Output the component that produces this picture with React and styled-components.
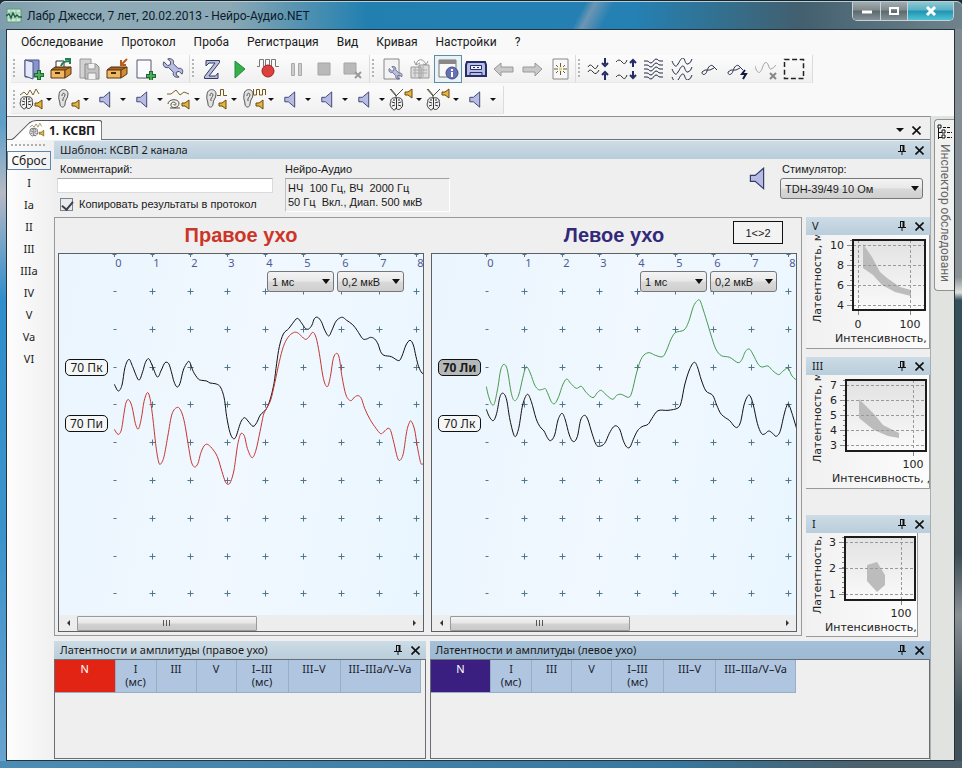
import React from "react";
import styled, { createGlobalStyle, css } from "styled-components";

const UI = '"Noto Sans", "Open Sans", sans-serif';
const CHROME = 'Roboto, "Noto Sans", sans-serif';
const FORM = '"Liberation Sans", Arial, sans-serif';
const PLOT = '"DejaVu Sans", Verdana, sans-serif';

const GlobalStyle = createGlobalStyle`
  * { box-sizing: border-box; }
  html, body, #root { height: 100%; }
  body { margin: 0; background: #1d2a30; overflow: hidden; font: 12px ${UI}; color: #1a1a1a; }
  button, input, select { font: inherit; color: inherit; margin: 0; }
`;

/* ---------- window frame ---------- */

const Window = styled.div`
  display: flex;
  flex-direction: column;
  height: 100vh;
  padding: 0 7px 7px 6px;
  border-top: 1px solid #16242c;
  border-radius: 6px 6px 0 0;
  background:
    linear-gradient(90deg, transparent 70%, #4c616b 90%) bottom / 100% 7px no-repeat,
    linear-gradient(90deg, #4b8db5, #2d6f96) bottom / 100% 7px no-repeat,
    linear-gradient(#7f8b91 0, #8a9194 36%, #dfe0df 38%, #35505a 39%, #3c4c54 72%, #8a8f92 80%, #43525a 92%) right / 7px 100% no-repeat,
    linear-gradient(#7f9ba9 0, #5e9fc8 16%, #b7b9c4 25%, #2f8ecb 39%, #3c93cb 70%, #6aa3cf 100%);
`;

const TitleBar = styled.header`
  display: flex;
  flex: none;
  height: 28px;
  margin: 0 -7px 0 -6px;
  padding: 0 8px 0 6px;
  border-top: 1px solid #b9cdd6;
  border-radius: 6px 6px 0 0;
  background:
    linear-gradient(118deg, transparent 60%, #8fa0b4aa 61%, transparent 63%),
    linear-gradient(90deg, #7f9dac 0, #8fabb7 8%, #8aa8b5 24%, #5593b1 31%, #2280b1 38%, #2580b3 66%, #33708f 75%, #425f6f 83%, #6f838c 100%);
`;

const Title = styled.h1`
  display: flex;
  flex: 1;
  align-items: center;
  gap: 5px;
  margin: 0;
  font: 400 12px/24px ${CHROME};
  color: #0c1c2c;
`;

const Caption = styled.div`
  display: flex;
  height: 19px;
  border: 1px solid #c6d3d8;
  border-top: 0;
  border-radius: 0 0 5px 5px;
  overflow: hidden;
`;

const CaptionButton = styled.button`
  display: grid;
  place-items: center;
  width: ${(p) => (p.$close ? 46 : 27)}px;
  padding: 0;
  border: 0;
  border-left: ${(p) => (p.$first ? "0" : "1px solid #c6d3d8")};
  background: ${(p) =>
    p.$close
      ? "linear-gradient(#8ec8d3, #58b1c4 45%, #1f93b0 50%, #4fc3d4)"
      : "linear-gradient(#a3abad, #7f8a8d 45%, #5b686c 50%, #849196)"};
`;

const Client = styled.div`
  display: flex;
  flex: 1;
  flex-direction: column;
  min-height: 0;
  border: 1px solid #24343c;
  background: #efefef;
`;

/* ---------- menu and toolbars ---------- */

const MenuBar = styled.nav`
  display: flex;
  flex: none;
  gap: 18px;
  height: 24px;
  padding-left: 14px;
  background: #f9f9f9;
`;

const MenuItem = styled.button`
  padding: 0;
  border: 0;
  background: none;
  font: 12px/22px ${CHROME};
`;

const ToolRow = styled.div`
  display: flex;
  flex: none;
  align-items: center;
  height: ${(p) => p.$height}px;
  padding-left: 4px;
  background: #f9f9f9;
`;

const ToolStrip = styled.div`
  display: flex;
  align-items: center;
  height: 28px;
  padding-right: ${(p) => p.$end || 0}px;
  border-bottom: 1px solid #e8e8e8;
  border-right: 1px solid #dcdcdc;
  background: linear-gradient(#fcfcfc, #f0f0f0);
`;

const Grip = styled.span`
  width: 2px;
  height: 20px;
  margin: 0 ${(p) => p.$after || 5}px 0 2px;
  background: repeating-linear-gradient(#b5b5b5 0 2px, transparent 2px 4px);
`;

const Tool = styled.button`
  display: grid;
  place-items: center;
  width: 28px;
  height: 28px;
  padding: 0;
  border: 1px solid ${(p) => (p.$active ? "#5a8fa5" : "transparent")};
  background: ${(p) => (p.$active ? "#eaf2f6" : "none")};
`;

const DropTool = styled.button`
  display: flex;
  align-items: center;
  gap: 2px;
  width: 37px;
  height: 28px;
  padding: 0;
  border: 0;
  background: none;
`;

const Caret = styled.span`
  border: ${(p) => (p.$size || 3)}px solid transparent;
  border-top-color: #111;
  border-bottom: 0;
`;

/* ---------- document tabs ---------- */

const TabBar = styled.div`
  display: flex;
  flex: none;
  align-items: flex-end;
  height: 24px;
  padding-right: 5px;
  border-top: 1px solid #8f8f8f;
  border-bottom: 1px solid #6c747a;
`;

const Tab = styled.button`
  position: relative;
  display: flex;
  align-items: center;
  gap: 3px;
  height: 20px;
  margin: 0 auto -1px 4px;
  padding: 0 7px 0 18px;
  border: 0;
  background: none;
  font-size: 12px;
  font-weight: 700;
`;

const TabShape = styled.svg`
  position: absolute;
  inset: 0;
  width: 100%;
  height: 100%;
  z-index: 0;
`;

const TabText = styled.span`
  position: relative;
  display: flex;
  align-items: center;
  gap: 4px;
`;

const BarButton = styled.button`
  display: grid;
  place-items: center;
  width: 17px;
  height: 18px;
  padding: 0;
  border: 0;
  background: none;
`;

const Body = styled.div`
  display: flex;
  flex: 1;
  min-height: 0;
`;

const Workspace = styled.div`
  display: flex;
  flex: 1;
  flex-direction: column;
  min-width: 0;
`;

const WorkRow = styled.div`
  display: flex;
  flex: 1;
  min-height: 0;
`;

/* ---------- left wave marks ---------- */

const Marks = styled.aside`
  display: flex;
  flex: none;
  flex-direction: column;
  width: 47px;
  padding-right: 3px;
  background: linear-gradient(90deg, #fdfdfd, #f0f0f0);
`;

const MarksGrip = styled.div`
  height: 2px;
  margin: 4px 4px 5px;
  background: repeating-linear-gradient(90deg, #b0b0b0 0 2px, transparent 2px 4px);
`;

const Mark = styled.button`
  height: ${(p) => (p.$active ? 19 : 22)}px;
  padding: 0;
  border: 1px solid ${(p) => (p.$active ? "#5c86ab" : "transparent")};
  background: none;
  font-size: ${(p) => (p.$active ? 12 : 11)}px;
  line-height: 16px;
  margin-bottom: ${(p) => (p.$active ? 2 : 0)}px;
`;

/* ---------- right auto-hide strip ---------- */

const SideStrip = styled.aside`
  flex: none;
  width: 24px;
  padding: 3px 0 0 3px;
  border-left: 1px solid #a7adb0;
  background: #e1e3e1;
`;

const SideTab = styled.button`
  display: flex;
  flex-direction: column;
  align-items: center;
  gap: 4px;
  width: 20px;
  height: 172px;
  padding: 4px 0;
  border: 1px solid #8e9396;
  border-right: 0;
  border-radius: 4px 0 0 4px;
  background: #f1f1f0;
  color: #666;
  font: 12px ${CHROME};
`;

const Vertical = styled.span`
  writing-mode: vertical-rl;
  white-space: nowrap;
  line-height: 18px;
`;

/* ---------- panels ---------- */

const PanelHead = styled.div`
  display: flex;
  flex: none;
  align-items: center;
  height: 18px;
  padding: 0 2px 0 6px;
  background: ${(p) =>
    p.$focus ? "linear-gradient(#a5c0d8, #9dbad3)" : "linear-gradient(#cddce6, #b9cddb)"};
`;

const PanelTitle = styled.h2`
  flex: 1;
  margin: 0;
  font: 400 11px/18px ${UI};
  white-space: nowrap;
`;

const Template = styled.section`
  display: flex;
  flex: none;
  flex-direction: column;
  margin-top: 1px;
`;

const Form = styled.form`
  display: flex;
  height: 58px;
  padding: 3px 7px 0 3px;
  font: 11px/14px ${FORM};
  white-space: nowrap;
`;

const Field = styled.div`
  display: flex;
  flex-direction: column;
  gap: 2px;
  width: ${(p) => p.$width}px;
  margin-right: ${(p) => p.$after || 0}px;
`;

const FieldLabel = styled.label`
  padding-left: ${(p) => p.$indent || 0}px;
`;

const TextInput = styled.input`
  height: 15px;
  padding: 0 3px;
  border: 1px solid #dadada;
  border-top-color: #a8a8a8;
  background: #fff;
`;

const CheckRow = styled.label`
  display: flex;
  align-items: center;
  gap: 6px;
  height: 16px;
  margin: 1px 0 0 3px;
`;

const Check = styled.input`
  appearance: none;
  width: 13px;
  height: 13px;
  border: 1px solid #7d858b;
  background: #e9ebec;
  &:checked::before {
    content: "";
    display: block;
    width: 5px;
    height: 9px;
    margin: 0 0 0 3px;
    border: solid #39424c;
    border-width: 0 2px 2px 0;
    transform: rotate(40deg);
  }
`;

const Readout = styled.output`
  height: 34px;
  padding: 2px;
  border: 1px solid #fff;
  border-top-color: #a0a0a0;
  border-left-color: #c0c0c0;
  line-height: 14px;
  white-space: pre;
`;

const Spacer = styled.div`
  flex: 1;
`;

const SpeakerBox = styled.div`
  width: 32px;
  padding-top: 5px;
`;

const SelectBox = styled.div`
  position: relative;
  width: ${(p) => p.$width}px;
  &::after {
    content: "";
    position: absolute;
    right: 4px;
    top: 8px;
    border: 4px solid transparent;
    border-top: 5px solid #111;
    border-bottom: 0;
    pointer-events: none;
  }
`;

const Select = styled.select`
  display: block;
  appearance: none;
  width: 100%;
  height: 21px;
  padding: 0 0 0 4px;
  border: 1px solid #777;
  border-radius: 3px;
  background: linear-gradient(#f4f4f4, #e8e8e8 48%, #d9d9d9 52%, #cfcfcf);
  font: 11px ${FORM};
`;

/* ---------- traces ---------- */

const Ears = styled.section`
  display: flex;
  flex: 1;
  gap: 7px;
  min-width: 0;
  padding: 0 4px 0 3px;
  border: 1px solid #999;
`;

const Ear = styled.div`
  display: flex;
  flex: 1;
  flex-direction: column;
  min-width: 0;
  padding-bottom: 3px;
`;

const EarHead = styled.div`
  position: relative;
  flex: none;
  height: 35px;
`;

const EarTitle = styled.h2`
  margin: 0;
  font: 700 20px/34px ${FORM};
  text-align: center;
  color: ${(p) => p.$color};
`;

const SwapButton = styled.button`
  position: absolute;
  top: 3px;
  right: 14px;
  width: 50px;
  height: 23px;
  padding: 0;
  border: 1px solid #111;
  background: #f3f3f3;
  font: 11px ${FORM};
`;

const Scope = styled.div`
  position: relative;
  display: flex;
  flex: 1;
  flex-direction: column;
  min-height: 0;
  border: 1px solid #5b6166;
  background: linear-gradient(100deg, #eaf5fd, #f1f8ff 50%, #e9f6ff);
`;

const Screen = styled.svg`
  display: block;
  flex: 1;
  width: 100%;
  min-height: 0;
`;

const Scales = styled.div`
  position: absolute;
  top: 17px;
  right: 19px;
  display: flex;
  gap: 3px;
`;

const TraceTag = styled.button`
  position: absolute;
  left: 6px;
  top: ${(p) => p.$top}px;
  width: 43px;
  height: 17px;
  padding: 0;
  border: 1px solid #111;
  border-radius: 5px;
  background: ${(p) => (p.$selected ? "#b4b8b8" : "#f5f7f7")};
  font-size: 12px;
  line-height: 14px;
  font-weight: ${(p) => (p.$selected ? 700 : 400)};
`;

const ScrollTrack = styled.div`
  display: flex;
  flex: none;
  align-items: center;
  height: 16px;
  background: #ededed;
`;

const ScrollArrow = styled.button`
  display: grid;
  place-items: center;
  width: 18px;
  height: 16px;
  padding: 0;
  border: 0;
  background: none;
  &::before {
    content: "";
    border: 3px solid transparent;
    ${(p) =>
      p.$right
        ? css`border-left-color: #333; border-right: 0;`
        : css`border-right-color: #333; border-left: 0;`}
  }
`;

const ScrollLane = styled.div`
  flex: 1;
`;

const Thumb = styled.div`
  display: grid;
  place-items: center;
  width: 55%;
  height: 15px;
  border: 1px solid #9a9a9a;
  border-radius: 1px;
  background: linear-gradient(#f3f3f3, #e6e6e6 48%, #d2d2d2 52%, #c9c9c9);
  &::before {
    content: "";
    width: 8px;
    height: 6px;
    background: repeating-linear-gradient(90deg, #555 0 1px, transparent 1px 3px);
  }
`;

/* ---------- latency mini plots ---------- */

const MiniColumn = styled.aside`
  display: flex;
  flex: none;
  flex-direction: column;
  width: 124px;
  margin-left: 4px;
`;

const MiniPanel = styled.section`
  margin-bottom: ${(p) => p.$after}px;
`;

const MiniSvg = styled.svg`
  display: block;
  width: ${(p) => (p.$narrow ? "112px" : "100%")};
  height: ${(p) => p.$height}px;
  border: solid #999;
  border-width: 0 1px 1px 0;
  background: linear-gradient(90deg, #f1f1f1, #fcfcfc);
`;

/* ---------- bottom tables ---------- */

const BottomRow = styled.div`
  display: flex;
  flex: none;
  gap: 4px;
  height: 118px;
  margin: 5px 0 1px;
`;

const TablePanel = styled.section`
  display: flex;
  flex: ${(p) => p.$grow} 1 0;
  flex-direction: column;
  min-width: 0;
`;

const TableBody = styled.div`
  flex: 1;
  border: 1px solid #6b6f73;
  overflow: hidden;
`;

const Table = styled.table`
  table-layout: fixed;
  width: 365px;
  border-collapse: collapse;
`;

const HeadCell = styled.th`
  width: ${(p) => p.$width}px;
  height: 32px;
  padding: 2px 0 0;
  border: solid #98aec6;
  border-width: 0 1px 1px 0;
  background: ${(p) => p.$fill || "#b0c6e0"};
  color: ${(p) => (p.$fill ? "#fff" : "#1a222c")};
  font-size: 11px;
  font-weight: 400;
  line-height: 13px;
  vertical-align: top;
  white-space: pre-line;
`;

/* ---------- icons ---------- */

const Svg = ({ w = 22, h = 22, children, ...rest }) => (
  <svg width={w} height={h} viewBox={`0 0 ${w} ${h}`} fill="none" stroke="#333" aria-hidden="true" {...rest}>
    {children}
  </svg>
);

const Cross = ({ color = "#111", size = 9 }) => (
  <svg width={size} height={size} viewBox="0 0 9 9" stroke={color} strokeWidth="1.6" aria-hidden="true">
    <path d="M.5.5l8 8M8.5.5l-8 8" />
  </svg>
);

const Pin = () => (
  <Svg w={9} h={10} stroke="#111">
    <path d="M2.5 0v6M2 .5h4M0 6.5h8M4 7v3" />
    <path d="M5.5 0v6" strokeWidth="2" />
  </Svg>
);

const PlusMark = ({ x, y }) => (
  <>
    <path d={`M${x} ${y - 5}v10M${x - 5} ${y}h10`} stroke="#1f6a30" strokeWidth="4" />
    <path d={`M${x} ${y - 4}v8M${x - 4} ${y}h8`} stroke="#4aab5a" strokeWidth="2" />
  </>
);

const Wrench = ({ fill = "#b9bde6" }) => (
  <path
    d="M2 4l4 4 3-1 0-3-3-3c4-1 7 1 6 5l5 5c4-1 6 2 4 6l-3-3-3 1 0 3 3 2c-4 1-7-1-6-5l-5-5C3 11 0 8 2 4z"
    fill={fill} stroke="#3d4261" transform="scale(.95)"
  />
);

const Drawer = ({ paper, arrow }) => (
  <>
    {paper && <path d="M6 11V3h8v7" fill="#fff" stroke="#333" />}
    <path d="M1 12l4-3h16l-3 4z" fill="#a86420" stroke="#4b2a0b" />
    <path d="M1 12h14v8H1z" fill="#f0b862" stroke="#5b360f" />
    <path d="M15 12l6-3v7l-6 4z" fill="#d08c34" stroke="#5b360f" />
    <path d="M5 15h5" strokeWidth="2" stroke="#4b2a0b" />
    {arrow === "out" ? (
      <path d="M11 8c1-3 4-5 8-5M15 1h5v5" stroke="#257f55" strokeWidth="2" />
    ) : (
      <path d="M21 1l-5 5M15 2v5h5" stroke="#bd5c1d" strokeWidth="2" />
    )}
  </>
);

const WaveRows = ({ rows, curve }) =>
  rows.map((y) => <path key={y} d={`M1 ${y}${curve}`} stroke="#222944" />);

const ICONS = {
  newExam: (
    <>
      <path d="M3 2h14v17H3z" fill="#8994cf" stroke="#4b5480" />
      <path d="M3 2l8 2v17l-8-3z" fill="#e3e8fb" stroke="#4b5480" />
      <PlusMark x={17} y={17} />
    </>
  ),
  openExam: <Drawer paper arrow="out" />,
  save: (
    <>
      <path d="M2 1h11v19H2z" fill="#d2d2d2" stroke="#999" />
      <path d="M7 6h11l3 3v12H7z" fill="#c2c2c2" stroke="#888" />
      <path d="M10 6v5h7V6M10 21v-6h8v6" fill="#f2f2f2" stroke="#999" />
    </>
  ),
  archive: <Drawer arrow="in" />,
  newPage: (
    <>
      <path d="M3 2h14v18H3z" fill="#fbfbff" stroke="#555b6e" />
      <PlusMark x={17} y={18} />
    </>
  ),
  wrench: <Wrench />,
  impedance: (
    <path d="M5 2.500h13.500v2L8 18h6.500l2.500-3v5.500H3.500v-2L14 5H8L5 8z" fill="#b9bde0" stroke="#353b60" />
  ),
  play: <path d="M6 3l10 8-10 9z" fill="#35b04c" stroke="#1f8a38" />,
  record: (
    <>
      <path d="M0 8.500h2.500v-7h4v7h2v-7h4v7h2v-7h4v7H22" stroke="#777" />
      <circle cx="11" cy="13" r="6" fill="#de3e3c" stroke="#9c2525" />
    </>
  ),
  pause: <path d="M6.500 5.500h3v12h-3zM13.500 5.500h3v12h-3z" fill="#ccc" stroke="#aaa" />,
  stop: <path d="M5 5h12v12H5z" fill="#b9b9b9" stroke="#a5a5a5" />,
  stopCancel: (
    <>
      <path d="M3 5h12v11H3z" fill="#b9b9b9" stroke="#a5a5a5" />
      <path d="M14 14l6 6M20 14l-6 6" stroke="#999" strokeWidth="2" />
    </>
  ),
  setup: (
    <>
      <path d="M3 1h15v20H3z" fill="#f3f3f3" stroke="#888" />
      <g transform="translate(7 8) scale(.68)"><Wrench /></g>
    </>
  ),
  copy: (
    <>
      <path d="M7 7c1-7 8-7 10 0M5 3l2 4 4-2M14 6l3 1 2-4" stroke="#999" />
      <path d="M2 9h10v11H2zM10 7h10v13H10z" fill="#ddd" stroke="#999" />
      <path d="M4 12h14M4 15h14M6 9v10M14 8v11" stroke="#aaa" />
    </>
  ),
  info: (
    <>
      <path d="M2 2h17v17H2z" fill="#f8f8f8" stroke="#777" />
      <path d="M2 4h17" strokeWidth="4" stroke="#888" />
      <circle cx="15" cy="15" r="6" fill="#6772b4" stroke="#404a88" />
      <path d="M15 14v5M15 11v2" stroke="#fff" strokeWidth="2" />
    </>
  ),
  tape: (
    <>
      <path d="M2 4h18l1 3v11H1V7z" fill="#b7bee8" stroke="#272d66" strokeWidth="2" />
      <path d="M5.500 7.500h11v4h-11z" fill="#eef0ff" stroke="#272d66" />
      <path d="M5 17v-2.500h12V17M8 9.500h2M12 9.500h2" stroke="#272d66" />
    </>
  ),
  back: <path d="M1 11l7-6v4h12v5H8v4z" fill="#c9c9c9" stroke="#999" />,
  forward: <path d="M21 11l-7-6v4H2v5h12v4z" fill="#c9c9c9" stroke="#999" />,
  flash: (
    <>
      <path d="M4 1h15v20H4z" fill="#f8f8f8" stroke="#888" />
      <path d="M11.500 5v4M11.500 13v4M5 11h4M14 11h4M7 7l2 2M16 7l-2 2M7 15l2-2M16 15l-2-2" stroke="#65603c" />
      <path d="M10 11h3" strokeWidth="3" stroke="#e4d478" />
    </>
  ),
  converge: (
    <>
      <path d="M1 9q2-4 5 0t5-2M1 14q2-4 5 0t6-2" />
      <path d="M18 0v6M18 22v-6M15 5l3 3 3-3M15 17l3-3 3 3" stroke="#252c63" strokeWidth="2" />
    </>
  ),
  diverge: (
    <>
      <path d="M1 4q3-4 6 0t5-2M1 19q3-4 6 0t5-2" />
      <path d="M18 3v6M18 13v6M15 5l3-3 3 3M15 17l3 3 3-3" stroke="#252c63" strokeWidth="2" />
    </>
  ),
  dense: <WaveRows rows={[3, 7, 11, 15, 19]} curve="h3c2 0 2 2 4 2s3-4 5-4 2 2 4 2h3" />,
  sparse: <WaveRows rows={[3, 11, 19]} curve="c2 5 4 7 6 3 2-3 3-6 5-6s2 7 5 6q3-1 4-5" />,
  single: <path d="M3 14c0 4 4 3 5-1s4-8 7-4l3 3M3 14l3-2h5l4-2" stroke="#30364f" />,
  quick: (
    <>
      <path d="M1 14c0 4 4 3 5-1s4-8 7-4l3 3M1 14l3-2h5l4-2" stroke="#30364f" />
      <path d="M18 12l-3 4h4l-3 5" stroke="#111a44" strokeWidth="2" />
    </>
  ),
  remove: (
    <>
      <path d="M0 8c2 8 5 8 7 3 1-4 3-8 5-6s2 7 4 6q3-1 5-4" stroke="#a5a5a5" />
      <path d="M15 15l6 6M21 15l-6 6" stroke="#888" strokeWidth="2" />
    </>
  ),
  select: <path d="M1.500 1.500h19v19h-19z" stroke="#222" strokeWidth="1.500" strokeDasharray="5 2.600" />,
};

const GoldSpeaker = ({ x, y }) => (
  <path d={`M${x} ${y + 3}h3l4-3v9l-4-3h-3z`} fill="#e3b53c" stroke="#6b4a10" />
);

const Brain = ({ x, y }) => (
  <g transform={`translate(${x} ${y})`} stroke="#333">
    <path d="M6 1C2 0 0 3 1 5c-2 2 0 6 1 6 1 3 4 2 4 0 1 2 4 2 5 0 2-1 2-5 1-6 1-3-2-5-6-4z" fill="#f1f1f1" />
    <path d="M6.500 1v11M2 5l3 1M11 5l-3 1M2 9l3-1M11 9l-3-1M4 2v2M9 2v2" />
  </g>
);

const EarShape = () => (
  <path d="M3 7c0-7 9-7 9-1 0 5-3 5-3 10 0 4-5 4-5 0 0-3-2-5-1-9zM6 8c0-4 3-3 3-1s-3 3-2 6" fill="#e2e2e2" stroke="#555" />
);

const Spiral = () => (
  <path d="M1 16c0-5 10-6 11-1 0 6-9 6-8 1 1-3 5-2 5 0s-3 1-2 0M3 20h10" stroke="#54503f" />
);

const Speaker = ({ scale = 1 }) => (
  <path d="M2 7h4l7-6v17l-7-6H2z" fill="#b8bce4" stroke="#333c6b" transform={`scale(${scale})`} />
);

const STIM_ICONS = {
  brain: (
    <>
      <path d="M1 7l4-3 3 3 3-5 3 5 3-6 3 5" stroke="#7a6523" />
      <Brain x={1} y={8} />
      <GoldSpeaker x={16} y={12} />
    </>
  ),
  ear: (<><EarShape /><GoldSpeaker x={16} y={12} /></>),
  speaker: <g transform="translate(5 3) scale(.9)"><Speaker /></g>,
  cochlea: (
    <>
      <path d="M0 6h4l5-4 4 5 4-3 5 2" stroke="#7a6523" />
      <Spiral />
      <GoldSpeaker x={15} y={12} />
    </>
  ),
  earPulse: (
    <>
      <EarShape />
      <path d="M13 7.500h3.500v-6h3v6H23" stroke="#75571b" />
      <GoldSpeaker x={15} y={12} />
    </>
  ),
  earTone: (
    <>
      <EarShape />
      <path d="M12.500 1v6h3V1.500h3V7h3V1.500h3V7" stroke="#75571b" />
      <GoldSpeaker x={15} y={12} />
    </>
  ),
  brainRays: (
    <>
      <path d="M1 1l6 7 7-7M2 1l5 6M7 8v2" stroke="#54503f" />
      <Brain x={1} y={9} />
      <GoldSpeaker x={16} y={1} />
    </>
  ),
};

const AppIcon = () => (
  <Svg w={16} h={16}>
    <path d="M1 1h14v13H1z" fill="#c9e8d4" stroke="#5b9a76" />
    <path d="M1 5h14M1 10h14M5 1v13M10 1v13" stroke="#8cc6a2" />
    <path d="M0 8l3-2 2 4 2-5 2 4 2-2 2 2h3" stroke="#1f5d47" strokeWidth="1.500" />
  </Svg>
);

/* ---------- data ---------- */

const MENU = ["Обследование", "Протокол", "Проба", "Регистрация", "Вид", "Кривая", "Настройки", "?"];

const TOOL_GROUPS = [
  { end: 2, tools: [["newExam", "Новое обследование"], ["openExam", "Открыть"], ["save", "Сохранить"], ["archive", "Архив"], ["newPage", "Новая проба"], ["wrench", "Параметры"]] },
  { end: 3, tools: [["impedance", "Импеданс"], ["play", "Старт"], ["record", "Запись"], ["pause", "Пауза"], ["stop", "Стоп"], ["stopCancel", "Отмена"]] },
  { end: 1, tools: [["setup", "Настройка"], ["copy", "Копировать"], ["info", "Сведения"], ["tape", "Магнитофон"], ["back", "Назад"], ["forward", "Вперёд"], ["flash", "Стимул"]] },
  { end: 4, tools: [["converge", "Сблизить"], ["diverge", "Раздвинуть"], ["dense", "Плотно"], ["sparse", "Редко"], ["single", "Кривая"], ["quick", "Быстро"], ["remove", "Удалить"], ["select", "Выделить"]] },
];

const STIMULI = ["brain", "ear", "speaker", "speaker", "cochlea", "earPulse", "earTone", "speaker", "speaker", "speaker", "brainRays", "brainRays", "speaker"];

const MARKS = ["I", "Ia", "II", "III", "IIIa", "IV", "V", "Va", "VI"];

/* Trace samples are stored in thirds of a pixel, as x y pairs. */
const RIGHT_EAR = {
  title: "Правое ухо",
  color: "#cd3527",
  offset: [-9, -4],
  axis: 55,
  traces: [
    { color: "#111", points: "193 403 205 423 216 405 225 352 237 328 248 350 266 390 278 365 286 338 296 326 306 345 322 381 334 360 345 338 356 341 364 365 372 395 381 411 390 400 400 360 412 338 419 336 430 365 445 387 455 391 470 393 480 399 495 401 508 407 517 424 524 452 530 500 540 548 550 566 558 560 566 535 574 513 584 503 594 513 609 529 620 518 631 495 648 478 660 450 672 400 680 340 688 290 700 252 716 236 728 220 742 205 754 218 766 235 776 237 786 225 793 206 803 202 814 215 824 240 836 258 846 240 856 217 866 206 878 202 890 211 908 224 922 242 938 266 950 267 962 262 974 267 984 282 992 305 1002 316 1024 320 1046 332 1056 318 1068 285 1080 271 1090 285 1098 320 1106 350 1116 369 1126 372" },
    { color: "#c5362f", points: "193 538 204 553 214 540 222 490 228 458 236 449 246 470 256 520 265 537 274 505 282 455 292 428 300 445 308 500 318 590 326 636 332 642 342 620 354 555 366 492 382 472 394 485 404 520 414 580 424 635 434 651 444 640 452 610 462 588 472 583 486 595 502 620 516 665 526 695 534 703 542 695 552 660 562 590 570 556 576 550 584 560 592 595 606 623 618 600 630 545 640 496 648 478 662 450 674 400 688 335 700 290 714 262 730 248 742 248 754 258 766 268 776 262 788 247 798 262 808 310 818 375 826 404 834 408 842 375 850 325 860 310 868 325 876 380 888 435 902 452 914 441 924 437 934 445 944 475 960 508 978 535 992 551 1002 545 1014 535 1022 542 1032 580 1042 622 1050 631 1060 610 1070 545 1078 518 1084 514 1094 540 1102 590 1112 638 1118 642 1126 640" },
  ],
  tags: [{ text: "70 Пк", top: 105 }, { text: "70 Пи", top: 161 }],
};

const LEFT_EAR = {
  title: "Левое ухо",
  color: "#33297a",
  offset: [-4, -4],
  axis: 54,
  swap: true,
  traces: [
    { color: "#479b4c", points: "175 410 182 440 192 464 200 458 210 410 218 360 228 343 238 360 250 430 260 452 272 435 284 385 292 355 298 352 308 372 320 405 332 419 344 418 352 416 360 432 370 455 380 461 392 440 404 405 416 387 428 400 445 415 460 409 475 428 495 443 508 428 520 421 535 435 554 448 566 436 580 433 602 442 612 425 624 375 636 335 648 315 664 308 682 316 704 320 716 300 728 270 742 248 768 240 782 215 796 170 808 152 816 152 826 180 840 225 852 265 864 298 880 317 905 322 930 338 942 328 952 305 964 297 976 315 990 342 1002 351 1020 348 1034 362 1052 374 1064 364 1080 355 1092 378 1110 394" },
    { color: "#111", points: "175 478 184 500 196 512 206 490 216 440 226 430 236 450 246 510 260 559 272 535 284 465 298 433 310 455 324 505 336 530 348 543 358 563 368 572 380 555 390 510 402 490 412 510 424 555 436 575 448 560 458 510 470 496 480 510 492 550 504 583 514 589 530 580 544 550 556 531 566 528 576 540 586 572 596 591 606 591 616 568 628 543 642 530 660 523 672 505 690 482 720 481 750 474 760 455 770 405 784 360 798 337 808 350 820 390 834 423 854 436 866 465 880 493 905 512 918 528 928 532 938 515 948 465 958 440 966 437 976 465 988 520 1000 550 1010 552 1022 543 1034 550 1044 559 1056 545 1068 495 1076 468 1082 463 1092 490 1110 550" },
  ],
  tags: [{ text: "70 Ли", top: 105, selected: true }, { text: "70 Лк", top: 161 }],
};

function smoothPath(samples, [dx, dy]) {
  const n = samples.split(" ").map(Number);
  const pts = [];
  for (let i = 0; i < n.length; i += 2) pts.push([n[i] / 3 + dx, n[i + 1] / 3 + dy]);
  const at = (i) => pts[Math.max(0, Math.min(pts.length - 1, i))];
  let d = `M${pts[0].join(" ")}`;
  for (let i = 0; i < pts.length - 1; i++) {
    const [a, b, c, e] = [at(i - 1), at(i), at(i + 1), at(i + 2)];
    d += `C${b[0] + (c[0] - a[0]) / 6} ${b[1] + (c[1] - a[1]) / 6} ${c[0] - (e[0] - b[0]) / 6} ${c[1] - (e[1] - b[1]) / 6} ${c[0]} ${c[1]}`;
  }
  return d;
}

const MINI_PLOTS = [
  {
    title: "V", after: 8, height: 114, box: [47, 5, 72, 70], labelX: 38,
    ys: [["10", 10], ["8", 30], ["6", 50], ["4", 70]], xs: [["0", 52], ["100", 104]],
    xBase: 93, caption: "Интенсивность,", captionAt: [29, 107], side: "Латентность, м", sideY: 88,
    shape: "57,9 66,22 74,37 81,43 94,52 105,55 105,61 89,57 76,50 67,40 57,33",
  },
  {
    title: "III", after: 26, height: 114, box: [40, 5, 80, 71], labelX: 31,
    ys: [["7", 10], ["6", 25], ["5", 40], ["4", 55], ["3", 70]], xs: [["100", 107]],
    xBase: 93, caption: "Интенсивность, д", captionAt: [26, 107], side: "Латентность, м", sideY: 88,
    shape: "53,24 68,39 77,50 93,58 93,63 82,61 68,55 53,43",
  },
  {
    title: "I", after: 0, height: 104, narrow: true, box: [39, 4, 70, 63], labelX: 30,
    ys: [["3", 9], ["2", 35], ["1", 61]], xs: [["100", 95]],
    xBase: 84, caption: "Интенсивность,", captionAt: [19, 98], side: "Латентность,", sideY: 81,
    shape: "61,32 71,29 79,42 79,52 71,59 61,48",
  },
];

const COLUMNS = [["N", 60], ["I\n(мс)", 41], ["III", 40], ["V", 40], ["I–III\n(мс)", 52], ["III–V", 52], ["III–IIIa/V–Va", 80]];

/* ---------- composed parts ---------- */

const PanelButtons = () => (
  <>
    <BarButton type="button" aria-label="Закрепить"><Pin /></BarButton>
    <BarButton type="button" aria-label="Закрыть"><Cross /></BarButton>
  </>
);

const range = (n) => Array.from({ length: n }, (_, i) => i);

function EarChart({ ear }) {
  const xs = range(9).map((i) => Math.round(ear.axis + i * 37.8) + 0.5);
  const ys = range(9).map((i) => Math.round(38 + i * 37.8) - 0.5);
  return (
    <Ear>
      <EarHead>
        <EarTitle $color={ear.color}>{ear.title}</EarTitle>
        {ear.swap && <SwapButton type="button">1&lt;&gt;2</SwapButton>}
      </EarHead>
      <Scope>
        <Screen role="img" aria-label={ear.title}>
          <path
            stroke="#54748a"
            fill="none"
            d={
              xs.map((x) => `M${x - 2} .5h4M${x} 0v3`).join("") +
              xs.map((x, i) => ys.map((y) => (i ? `M${x - 3} ${y}h6M${x} ${y - 3}v6` : `M${x - 1} ${y}h3`)).join("")).join("")
            }
          />
          <g fontFamily={UI} fontSize="11" fill="#4f5a94" textAnchor="middle">
            {xs.map((x, i) => <text key={x} x={x + 4} y="13">{i}</text>)}
          </g>
          {ear.traces.map((t) => (
            <path key={t.color} d={smoothPath(t.points, ear.offset)} stroke={t.color} fill="none" />
          ))}
        </Screen>
        {ear.tags.map((t) => (
          <TraceTag key={t.text} type="button" $top={t.top} $selected={t.selected}>{t.text}</TraceTag>
        ))}
        <Scales>
          <SelectBox $width={67}>
            <Select aria-label="Развёртка"><option>1 мс</option></Select>
          </SelectBox>
          <SelectBox $width={67}>
            <Select aria-label="Чувствительность"><option>0,2 мкВ</option></Select>
          </SelectBox>
        </Scales>
        <ScrollTrack>
          <ScrollArrow type="button" aria-label="Влево" />
          <ScrollLane><Thumb /></ScrollLane>
          <ScrollArrow type="button" $right aria-label="Вправо" />
        </ScrollTrack>
      </Scope>
    </Ear>
  );
}

function MiniPlot({ plot }) {
  const [x, y, w, h] = plot.box;
  return (
    <MiniPanel $after={plot.after}>
      <PanelHead>
        <PanelTitle>{plot.title}</PanelTitle>
        <PanelButtons />
      </PanelHead>
      <MiniSvg $height={plot.height} $narrow={plot.narrow} role="img" aria-label={`Латентность ${plot.title}`}>
        <defs>
          <linearGradient id={`shade${plot.title}`} x2="0" y2="1">
            <stop stopColor="#e2e2e2" /><stop offset="1" stopColor="#fafafa" />
          </linearGradient>
        </defs>
        <rect x={x} y={y} width={w} height={h} fill={`url(#shade${plot.title})`} />
        <polygon points={plot.shape} fill="#bcbcbc" />
        <g stroke="#999" strokeDasharray="3 2">
          {plot.ys.map(([t, v]) => <path key={t} d={`M${x} ${v + 0.5}h${w}`} />)}
          {plot.xs.map(([t, v]) => <path key={t} d={`M${v + 0.5} ${y}v${h}`} />)}
        </g>
        <g stroke="#888">
          {plot.ys.map(([t, v]) => <path key={t} d={`M${x - 6} ${v + 0.5}h6`} />)}
          {range(Math.floor(h / 5)).map((i) => <path key={i} d={`M${x - 3} ${y + i * 5 + 0.5}h3`} />)}
          {plot.xs.map(([t, v]) => <path key={t} d={`M${v + 0.5} ${y + h}v5`} />)}
        </g>
        <rect x={x} y={y} width={w} height={h} fill="none" stroke="#1c1c1c" strokeWidth="2" />
        <g fontFamily={PLOT} fontSize="11" fill="#222">
          {plot.ys.map(([t, v]) => <text key={t} x={plot.labelX} y={v + 4} textAnchor="end">{t}</text>)}
          {plot.xs.map(([t, v]) => <text key={t} x={v} y={plot.xBase} textAnchor="middle">{t}</text>)}
          <text x={plot.captionAt[0]} y={plot.captionAt[1]}>{plot.caption}</text>
          <text transform={`translate(15 ${plot.sideY}) rotate(-90)`}>{plot.side}</text>
        </g>
      </MiniSvg>
    </MiniPanel>
  );
}

const LatencyTable = ({ title, fill, grow, focus }) => (
  <TablePanel $grow={grow}>
    <PanelHead $focus={focus}>
      <PanelTitle>{title}</PanelTitle>
      <PanelButtons />
    </PanelHead>
    <TableBody>
      <Table>
        <thead>
          <tr>
            {COLUMNS.map(([text, width], i) => (
              <HeadCell key={text} scope="col" $width={width} $fill={i ? undefined : fill}>{text}</HeadCell>
            ))}
          </tr>
        </thead>
      </Table>
    </TableBody>
  </TablePanel>
);

export default function App() {
  return (
    <>
      <GlobalStyle />
      <Window>
        <TitleBar>
          <Title><AppIcon />Лабр Джесси, 7 лет, 20.02.2013 - Нейро-Аудио.NET</Title>
          <Caption>
            <CaptionButton type="button" $first aria-label="Свернуть">
              <Svg w={12} h={8}><path d="M1 5h10" stroke="#fff" strokeWidth="3" /></Svg>
            </CaptionButton>
            <CaptionButton type="button" aria-label="Развернуть">
              <Svg w={12} h={10}><path d="M2 2h8v6H2z" stroke="#fff" strokeWidth="2" /></Svg>
            </CaptionButton>
            <CaptionButton type="button" $close aria-label="Закрыть окно">
              <Svg w={12} h={10} stroke="#fff" strokeWidth="3"><path d="M2 1l8 8M10 1L2 9" /></Svg>
            </CaptionButton>
          </Caption>
        </TitleBar>
        <Client>
          <MenuBar>
            {MENU.map((m) => <MenuItem key={m} type="button">{m}</MenuItem>)}
          </MenuBar>
          <ToolRow $height={30}>
            {TOOL_GROUPS.map((g) => (
              <ToolStrip key={g.tools[0][0]} $end={g.end}>
                <Grip $after={4} />
                {g.tools.map(([name, label]) => (
                  <Tool key={name} type="button" aria-label={label} $active={name === "info"}>
                    <Svg>{ICONS[name]}</Svg>
                  </Tool>
                ))}
              </ToolStrip>
            ))}
          </ToolRow>
          <ToolRow $height={32}>
            <ToolStrip $end={3}>
              <Grip $after={4} />
              {STIMULI.map((name, i) => (
                <DropTool key={i} type="button" aria-label={`Стимуляция ${i + 1}`}>
                  <Svg w={25} h={23}>{STIM_ICONS[name]}</Svg>
                  <Caret />
                </DropTool>
              ))}
            </ToolStrip>
          </ToolRow>
          <Body>
            <Workspace>
              <TabBar>
                <Tab type="button">
                  <TabShape viewBox="0 0 90 20" preserveAspectRatio="none">
                    <path d="M0 20L3 18 18 3Q21 .5 25 .5H87Q89.500 .5 89.500 3V20" fill="#fff" stroke="#555" />
                  </TabShape>
                  <TabText>
                    <svg width="16" height="16" viewBox="0 0 25 23" fill="none" aria-hidden="true">{STIM_ICONS.brain}</svg>
                    1. КСВП
                  </TabText>
                </Tab>
                <BarButton type="button" aria-label="Список вкладок"><Caret $size={4} /></BarButton>
                <BarButton type="button" aria-label="Закрыть вкладку"><Cross /></BarButton>
              </TabBar>
              <Body>
                <Marks>
                  <MarksGrip />
                  <Mark type="button" $active>Сброс</Mark>
                  {MARKS.map((m) => <Mark key={m} type="button">{m}</Mark>)}
                </Marks>
                <Workspace>
                  <Template>
                    <PanelHead>
                      <PanelTitle>Шаблон: КСВП 2 канала</PanelTitle>
                      <PanelButtons />
                    </PanelHead>
                    <Form>
                      <Field $width={216} $after={12}>
                        <FieldLabel htmlFor="comment" $indent={3}>Комментарий:</FieldLabel>
                        <TextInput id="comment" type="text" />
                        <CheckRow>
                          <Check type="checkbox" defaultChecked />
                          Копировать результаты в протокол
                        </CheckRow>
                      </Field>
                      <Field $width={165}>
                        <FieldLabel htmlFor="device">Нейро-Аудио</FieldLabel>
                        <Readout id="device">{"НЧ  100 Гц, ВЧ  2000 Гц\n50 Гц  Вкл., Диап. 500 мкВ"}</Readout>
                      </Field>
                      <Spacer />
                      <SpeakerBox>
                        <Svg w={18} h={24}><Speaker scale={1.2} /></Svg>
                      </SpeakerBox>
                      <Field $width={143}>
                        <FieldLabel htmlFor="stimulator" $indent={2}>Стимулятор:</FieldLabel>
                        <SelectBox $width={143}>
                          <Select id="stimulator"><option>TDH-39/49 10 Ом</option></Select>
                        </SelectBox>
                      </Field>
                    </Form>
                  </Template>
                  <WorkRow>
                    <Ears>
                      <EarChart ear={RIGHT_EAR} />
                      <EarChart ear={LEFT_EAR} />
                    </Ears>
                    <MiniColumn>
                      {MINI_PLOTS.map((p) => <MiniPlot key={p.title} plot={p} />)}
                    </MiniColumn>
                  </WorkRow>
                  <BottomRow>
                    <LatencyTable title="Латентности и амплитуды (правое ухо)" fill="#e12414" grow={372} />
                    <LatencyTable title="Латентности и амплитуды (левое ухо)" fill="#3a1e80" grow={501} focus />
                  </BottomRow>
                </Workspace>
              </Body>
            </Workspace>
            <SideStrip>
              <SideTab type="button">
                <Svg w={15} h={16} stroke="#111">
                  <path d="M1.500 3v12M1 8.500h5M1 13.500h5" />
                  <path d="M1 1h3v3H1zM5 6h3v3H5zM5 11h3v3H5z" fill="#fff" />
                  <path d="M6 3.500h8M10 8.500h5M10 13.500h5" strokeDasharray="3 1" />
                </Svg>
                <Vertical>Инспектор обследовани</Vertical>
              </SideTab>
            </SideStrip>
          </Body>
        </Client>
      </Window>
    </>
  );
}
